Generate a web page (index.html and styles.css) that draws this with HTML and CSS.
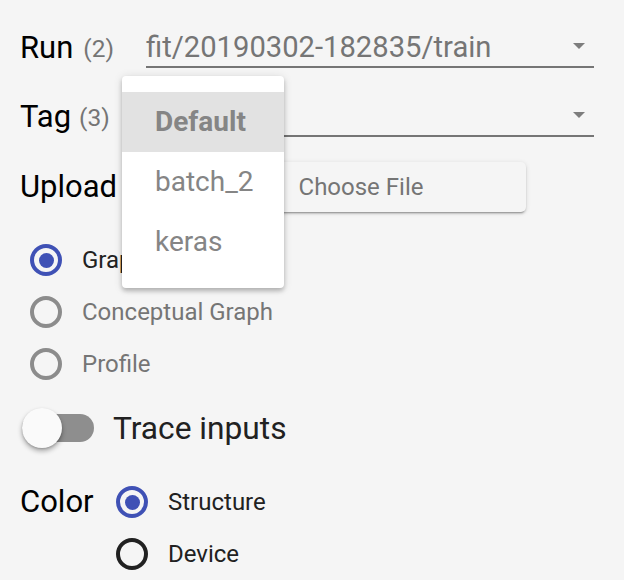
FILE: index.html
```html
<!DOCTYPE html>
<html>
<head>
<meta charset="utf-8">
<link rel="stylesheet" href="styles.css">
</head>
<body>
<div class="panel">
  <div class="row select-row run-row">
    <div class="label-col"><span class="label">Run</span><span class="count">(2)</span></div>
    <div class="select">
      <span class="select-text">fit/20190302-182835/train</span>
      <span class="arrow"></span>
    </div>
  </div>
  <div class="row select-row tag-row">
    <div class="label-col"><span class="label">Tag</span><span class="count tag-count">(3)</span></div>
    <div class="select">
      <span class="select-text"></span>
      <span class="arrow"></span>
    </div>
  </div>
  <div class="row upload-row">
    <div class="upload-label"><span class="label">Upload</span></div>
    <div class="button">Choose File</div>
  </div>
  <div class="radio-group">
    <div class="radio-row">
      <span class="radio on"></span><span class="radio-label dark">Graph</span>
    </div>
    <div class="radio-row">
      <span class="radio off"></span><span class="radio-label">Conceptual Graph</span>
    </div>
    <div class="radio-row">
      <span class="radio off"></span><span class="radio-label">Profile</span>
    </div>
  </div>
  <div class="row toggle-row">
    <div class="toggle">
      <span class="track"></span>
      <span class="knob"></span>
    </div>
    <span class="toggle-label">Trace inputs</span>
  </div>
  <div class="color-section">
    <div class="color-label"><span class="label">Color</span></div>
    <div class="color-options">
      <div class="radio-row">
        <span class="radio on"></span><span class="radio-label dark">Structure</span>
      </div>
      <div class="radio-row">
        <span class="radio off black"></span><span class="radio-label dark">Device</span>
      </div>
    </div>
  </div>
  <div class="menu">
    <div class="menu-item selected">Default</div>
    <div class="menu-item">batch_2</div>
    <div class="menu-item">keras</div>
  </div>
</div>
</body>
</html>
```

FILE: styles.css
```css
html, body {
  margin: 0;
  padding: 0;
  background: #f5f5f5;
  font-family: Roboto, "Liberation Sans", sans-serif;
  overflow: hidden;
}

.panel {
  position: relative;
  width: 624px;
  height: 580px;
  box-sizing: border-box;
  padding: 28px 30px 0 20px;
  display: flex;
  flex-direction: column;
}

.row {
  display: flex;
  align-items: center;
}

.label {
  font-size: 31px;
  color: #000;
  line-height: 40px;
}

.count {
  font-size: 24.5px;
  color: #757575;
  margin-left: 10px;
}

.tag-count {
  margin-left: 8px;
}

.select-row {
  height: 40px;
  align-items: stretch;
}

.tag-row {
  margin-top: 29px;
}

.label-col {
  width: 126px;
  display: flex;
  align-items: center;
  white-space: nowrap;
}

.select {
  width: 448px;
  box-sizing: border-box;
  border-bottom: 2px solid #757575;
  display: flex;
  align-items: center;
  justify-content: space-between;
  padding-right: 9px;
}

.select-text {
  font-size: 29.2px;
  color: #757575;
  line-height: 38px;
}

.arrow {
  width: 0;
  height: 0;
  border-left: 6px solid transparent;
  border-right: 6px solid transparent;
  border-top: 6px solid #7d7d7d;
  margin-top: -2px;
}

.upload-row {
  margin-top: 25px;
  height: 50px;
}

.upload-label {
  width: 176px;
  display: flex;
  align-items: center;
}

.button {
  width: 330px;
  height: 50px;
  border-radius: 5px;
  background: #f5f5f5;
  box-shadow: 0 2px 2px rgba(0, 0, 0, 0.14), 0 1px 5px rgba(0, 0, 0, 0.12), 0 3px 1px -2px rgba(0, 0, 0, 0.2);
  display: flex;
  align-items: center;
  justify-content: center;
  font-size: 24px;
  color: #757575;
}

.radio-group {
  margin-top: 22px;
  display: flex;
  flex-direction: column;
  padding-left: 10px;
}

.radio-row {
  height: 52px;
  display: flex;
  align-items: center;
}

.radio {
  width: 32px;
  height: 32px;
  box-sizing: border-box;
  border-radius: 50%;
  border: 4px solid #8c8c8c;
  display: flex;
  align-items: center;
  justify-content: center;
  flex-shrink: 0;
}

.radio.on {
  border-color: #3f51b5;
}

.radio.on::after {
  content: "";
  width: 15px;
  height: 15px;
  border-radius: 50%;
  background: #3f51b5;
}

.radio.black {
  border-color: #212121;
}

.radio-label {
  margin-left: 20px;
  font-size: 24px;
  color: #757575;
}

.radio-label.dark {
  color: #212121;
}

.toggle-row {
  margin-top: 18px;
  height: 40px;
}

.toggle {
  position: relative;
  width: 74px;
  height: 40px;
  display: flex;
  align-items: center;
}

.track {
  margin-left: 2px;
  width: 72px;
  height: 28px;
  border-radius: 14px;
  background: #8e8e8e;
}

.knob {
  position: absolute;
  left: 2px;
  top: 0;
  width: 40px;
  height: 40px;
  border-radius: 50%;
  background: #fafafa;
  box-shadow: 0 3px 5px rgba(0, 0, 0, 0.32), 0 1px 2px rgba(0, 0, 0, 0.15);
}

.toggle-label {
  margin-left: 19px;
  font-size: 31.7px;
  color: #212121;
}

.color-section {
  margin-top: 28px;
  display: flex;
}

.color-label {
  width: 96px;
  height: 52px;
  display: flex;
  align-items: center;
}

.color-options {
  display: flex;
  flex-direction: column;
}

.menu {
  position: absolute;
  left: 122px;
  top: 76px;
  width: 162px;
  padding: 16px 0;
  background: #fff;
  border-radius: 4px;
  box-shadow: 0 3px 4px rgba(0, 0, 0, 0.22), 0 1px 10px rgba(0, 0, 0, 0.12);
}

.menu-item {
  height: 60px;
  line-height: 60px;
  padding-left: 33px;
  font-size: 28px;
  color: #858585;
  white-space: nowrap;
}

.menu-item.selected {
  background: #e2e2e2;
  font-weight: bold;
}
```
